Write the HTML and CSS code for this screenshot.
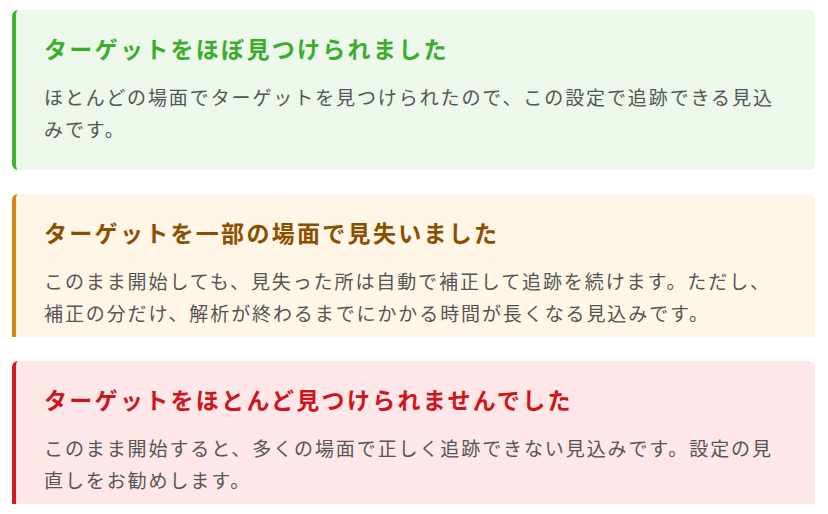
FILE: index.html
```html
<!DOCTYPE html>
<html lang="ja">
<head>
<meta charset="utf-8">
<link rel="stylesheet" href="styles.css">
</head>
<body>
<div class="stack">
  <div class="callout success">
    <div class="title">ターゲットをほぼ見つけられました</div>
    <p class="text">ほとんどの場面でターゲットを見つけられたので、この設定で追跡できる見込みです。</p>
  </div>
  <div class="callout warning clipped">
    <div class="title">ターゲットを一部の場面で見失いました</div>
    <p class="text">このまま開始しても、見失った所は自動で補正して追跡を続けます。ただし、補正の分だけ、解析が終わるまでにかかる時間が長くなる見込みです。</p>
  </div>
  <div class="callout danger clipped">
    <div class="title">ターゲットをほとんど見つけられませんでした</div>
    <p class="text">このまま開始すると、多くの場面で正しく追跡できない見込みです。設定の見直しをお勧めします。</p>
  </div>
</div>
</body>
</html>
```
FILE: styles.css
```css
html, body {
  margin: 0;
  padding: 0;
  background: #ffffff;
}
body {
  font-family: "Noto Sans CJK JP", "Noto Sans", sans-serif;
}
.stack {
  display: flex;
  flex-direction: column;
  gap: 24px;
  padding: 10px 13px 0 12px;
}
.callout {
  border-left: 4px solid;
  border-radius: 6px;
  padding: 22px 28px 25px 28px;
  box-sizing: border-box;
}
.clipped {
  height: 143px;
  overflow: hidden;
  border-bottom-left-radius: 0;
  border-bottom-right-radius: 0;
}
.title {
  font-size: 23px;
  line-height: 32px;
  font-weight: 700;
  letter-spacing: 0.1em;
  margin-bottom: 17px;
}
.text {
  margin: 0;
  font-size: 19px;
  line-height: 32px;
  letter-spacing: 0.1em;
  color: #555555;
}
.success {
  background: #edf7ec;
  border-color: #3cb52d;
}
.success .title { color: #3aae2b; }
.warning {
  background: #fff6e8;
  border-color: #d8870f;
}
.warning .title { color: #8a5000; }
.danger {
  background: #fde7e8;
  border-color: #d51a1f;
}
.danger .title { color: #d0141b; }
```
